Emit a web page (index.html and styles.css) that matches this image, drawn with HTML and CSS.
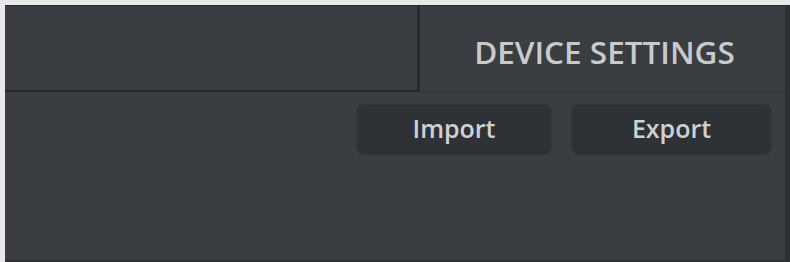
FILE: index.html
```html
<!DOCTYPE html>
<html>
<head>
<meta charset="utf-8">
<link rel="stylesheet" href="styles.css">
</head>
<body>
<div class="window">
  <div class="tabs">
    <div class="tab tab-blank"></div>
    <div class="tab tab-active">DEVICE SETTINGS</div>
  </div>
  <div class="content">
    <div class="actions">
      <button class="btn btn-import">Import</button>
      <button class="btn btn-export">Export</button>
    </div>
  </div>
</div>
</body>
</html>
```
FILE: styles.css
```css
html, body {
  margin: 0;
  padding: 0;
  width: 790px;
  height: 262px;
  overflow: hidden;
  background: #e9e9e9;
}
.window {
  margin: 5px 0 0 5px;
  height: 257px;
  background: #3a3d41;
  display: flex;
  flex-direction: column;
  border-right: 5px solid #2e3134;
  border-top: 1px solid #2a2c2f;
  box-sizing: border-box;
  font-family: "Open Sans", "DejaVu Sans", sans-serif;
}
.tabs {
  display: flex;
  height: 86px;
  flex: none;
}
.tab {
  box-sizing: border-box;
}
.tab-blank {
  width: 415px;
  border-right: 3px solid #27292c;
  border-bottom: 2px solid #26282b;
  background: #3a3d41;
}
.tab-active {
  flex: 1;
  display: flex;
  align-items: center;
  justify-content: center;
  color: #c9cacb;
  font-size: 31.5px;
  font-weight: 600;
  letter-spacing: 0;
  padding: 6px 0 0 4px;
  border-bottom: 1px solid #34373a;
}
.content {
  flex: 1;
  display: flex;
  flex-direction: column;
  border-bottom: 2px solid #2f3235;
}
.actions {
  display: flex;
  justify-content: flex-end;
  gap: 21px;
  padding: 12px 14px 0 0;
}
.btn {
  height: 49px;
  border: none;
  border-radius: 7px;
  background: #2e3135;
  box-shadow: 0 1px 2px rgba(0,0,0,0.35), inset 0 1px 0 rgba(255,255,255,0.03);
  color: #cfd0d1;
  font-family: "Open Sans", "DejaVu Sans", sans-serif;
  font-size: 25px;
  font-weight: 600;
  padding: 0 0 2px 0;
}
.btn-import { width: 194px; }
.btn-export { width: 199px; }
```
